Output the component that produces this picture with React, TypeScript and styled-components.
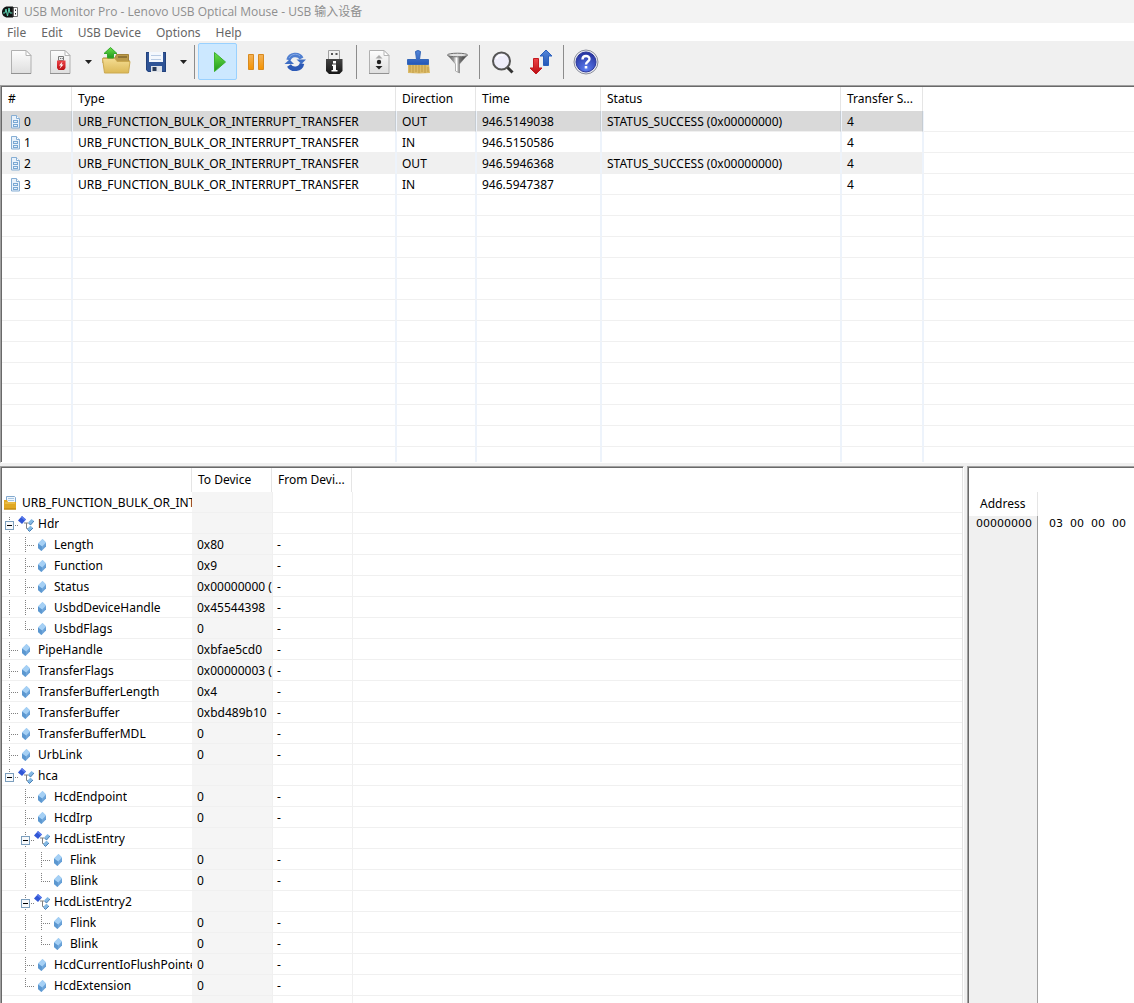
import React, { useState } from "react";
import styled, { createGlobalStyle } from "styled-components";

const GlobalStyle = createGlobalStyle`
  *, *::before, *::after { box-sizing: border-box; }
  body {
    margin: 0;
    background: #f0f0f0;
    color: #000;
    font: 12px/20px "Noto Sans", "Noto Sans CJK SC", sans-serif;
  }
  button { font: inherit; color: inherit; }
`;

const Window = styled.div`
  display: grid;
  grid-template-rows: auto auto auto minmax(0, 381fr) minmax(0, 537fr);
  height: 100vh;
  overflow: hidden;
`;

const TitleBar = styled.header`
  display: flex;
  align-items: center;
  gap: 6px;
  height: 23px;
  padding-left: 2px;
  background: #f3f3f3;
  color: #8f8f8f;
`;

const Title = styled.h1`
  margin: 0;
  font-family: "Open Sans", "Noto Sans CJK SC", sans-serif;
  font-size: 12px;
  font-weight: 400;
`;

const MenuBar = styled.nav`
  display: flex;
  gap: 15px;
  height: 18px;
  padding: 1px 0 0 7px;
  background: #fff;
  color: #666;
`;

const MenuItem = styled.button`
  padding: 0;
  border: 0;
  background: none;
  line-height: 18px;
`;

const Toolbar = styled.div`
  display: flex;
  padding: 2px 2px 5px;
  background: #f0f0f0;
`;

const ToolButton = styled.button<{ $active?: boolean }>`
  display: flex;
  align-items: center;
  justify-content: center;
  width: 39px;
  height: 37px;
  padding: 0;
  border: 1px solid ${(p) => (p.$active ? "#99d1ff" : "transparent")};
  border-radius: 2px;
  background: ${(p) => (p.$active ? "#cce8ff" : "transparent")};
`;

const ArrowButton = styled(ToolButton)`
  width: 17px;
`;

const ToolSeparator = styled.span`
  width: 1px;
  height: 34px;
  margin: 2px 3px 0 2px;
  background: #8c8c8c;
`;

const Pane = styled.section<{ $openRight?: boolean; $openBottom?: boolean }>`
  min-width: 0;
  overflow: hidden;
  background: #fff;
  border-style: solid;
  border-width: 1px ${(p) => (p.$openRight ? 0 : "1px")} ${(p) => (p.$openBottom ? 0 : "1px")} 1px;
  border-color: #a0a0a0 #fff #fff #a0a0a0;
  box-shadow:
    inset 1px 1px 0 #696969,
    inset ${(p) => (p.$openRight ? 0 : "-1px")} ${(p) => (p.$openBottom ? 0 : "-1px")} 0 #e3e3e3;
  padding: 1px ${(p) => (p.$openRight ? 0 : "1px")} ${(p) => (p.$openBottom ? 0 : "1px")} 1px;
`;

const RequestPane = styled(Pane)`
  margin-bottom: 3px;
`;

const LowerPanes = styled.div`
  display: grid;
  grid-template-columns: minmax(0, 964fr) minmax(0, 167fr);
  gap: 3px;
  min-height: 0;
`;

const Table = styled.table`
  width: 100%;
  table-layout: fixed;
  border-collapse: separate;
  border-spacing: 0;
`;

const Col = styled.col<{ $width?: number }>`
  width: ${(p) => (p.$width ? `${p.$width}px` : "auto")};
`;

const HeadCell = styled.th<{ $last?: boolean }>`
  height: 24px;
  padding: 0 5px 0 6px;
  border-right: ${(p) => (p.$last ? "0" : "1px solid #e5e5e5")};
  font-weight: 400;
  text-align: left;
  white-space: nowrap;
  overflow: hidden;
  text-overflow: ellipsis;
`;

const RequestRow = styled.tr<{ $tone?: "selected" | "shaded" }>`
  line-height: 18px;
  background: ${(p) => (p.$tone === "selected" ? "#d9d9d9" : p.$tone === "shaded" ? "#f0f0f0" : "#fff")};
`;

const RequestCell = styled.td<{ $first?: boolean; $selected?: boolean; $filler?: boolean }>`
  height: 21px;
  padding: 2px 0 0 ${(p) => (p.$first ? "6px" : "5px")};
  border-bottom: 1px solid #f0f0f0;
  border-left: ${(p) => (p.$first ? "0" : "1px solid #edf3fb")};
  border-right: ${(p) => (p.$filler ? "0" : `1px solid ${p.$selected ? "#c6ccd2" : "#edf3fb"}`)};
  background: ${(p) => (p.$filler ? "#fff" : "transparent")};
  white-space: nowrap;
  overflow: hidden;
`;

const IndexLabel = styled.span`
  display: flex;
  align-items: center;
  gap: 2px;
`;

const TreeCell = styled.td`
  height: 21px;
  padding: 0;
  border-bottom: 1px solid #f0f0f0;
  overflow: hidden;
`;

const TreeLabel = styled.div`
  display: flex;
  align-items: center;
  height: 20px;
  white-space: nowrap;

  svg, button { flex: none; }
  svg { margin-top: 1px; }
`;

const NodeName = styled.span`
  min-width: 0;
  margin-left: 4px;
  padding-top: 2px;
  line-height: 18px;
  overflow: hidden;
`;

const Expander = styled.button`
  display: block;
  width: 16px;
  height: 20px;
  padding: 0;
  border: 0;
  background: none;

  svg { display: block; margin-top: 3px; }
`;

const ValueCell = styled.td<{ $tinted?: boolean }>`
  height: 21px;
  padding: 2px 0 0 ${(p) => (p.$tinted ? "5px" : "4px")};
  border-bottom: 1px solid #f0f0f0;
  border-left: ${(p) => (p.$tinted ? "0" : "1px solid #f0f0f0")};
  background: ${(p) => (p.$tinted ? "#f5f5f5" : "#fff")};
  line-height: 18px;
  white-space: nowrap;
  overflow: hidden;
`;

const DumpPane = styled(Pane)`
  display: flex;
  flex-direction: column;
  padding-top: 25px;
`;

const DumpTable = styled.table`
  flex: 1;
  width: 100%;
  table-layout: fixed;
  border-spacing: 0;
  border-collapse: separate;
`;

const AddressHead = styled(HeadCell)`
  padding: 0 0 0 11px;
`;

const AddressCell = styled.td`
  padding: 0 0 0 7px;
  border-right: 1px solid #a0a0a0;
  background: #f0f0f0;
  vertical-align: top;
  font: 11px/16px "DejaVu Sans", sans-serif;
`;

const BytesCell = styled.td`
  padding: 0 0 0 11px;
  vertical-align: top;
  font: 11px/16px "DejaVu Sans", sans-serif;
`;

const Bytes = styled.div`
  display: grid;
  grid-template-columns: repeat(4, 21px);
`;

/* ---------- icons ---------- */

const ToolSvg = ({ children }: { children: React.ReactNode }) => (
  <svg width="29" height="29" viewBox="0 0 29 29" fill="none" aria-hidden="true">{children}</svg>
);

const Page = () => (
  <>
    <path d="M4.5 3.5h14.5l5 5v18h-19.5z" fill="url(#paper)" stroke="#b0b0b0" />
    <path d="M19 3.5v5h5z" fill="#fff" stroke="#b5b5b5" />
    <path d="M4 26.5h20" stroke="#929292" />
  </>
);

const Defs = styled.svg`
  position: absolute;
`;

const Gradients = () => (
  <Defs width="0" height="0" aria-hidden="true">
    <defs>
      <linearGradient id="paper" x1="0" y1="0" x2="0" y2="1"><stop stopColor="#fdfdfd" /><stop offset="1" stopColor="#dedede" /></linearGradient>
      <linearGradient id="manila" x1="0" y1="0" x2="0" y2="1"><stop stopColor="#f4dc92" /><stop offset="1" stopColor="#dcb957" /></linearGradient>
      <linearGradient id="green" x1="0" y1="0" x2="0" y2="1"><stop stopColor="#6be04a" /><stop offset="1" stopColor="#20981b" /></linearGradient>
      <linearGradient id="orange" x1="0" y1="0" x2="0" y2="1"><stop stopColor="#f2b25a" /><stop offset="1" stopColor="#f59300" /></linearGradient>
      <linearGradient id="blue" x1="0" y1="0" x2="0" y2="1"><stop stopColor="#5586d8" /><stop offset="1" stopColor="#2458b8" /></linearGradient>
      <linearGradient id="red" x1="0" y1="0" x2="0" y2="1"><stop stopColor="#ef4549" /><stop offset="1" stopColor="#b90d12" /></linearGradient>
      <linearGradient id="dark" x1="0" y1="0" x2="0" y2="1"><stop stopColor="#444" /><stop offset="1" stopColor="#171717" /></linearGradient>
      <linearGradient id="metal" x1="0" y1="0" x2="1" y2="0"><stop stopColor="#4a4a4a" /><stop offset=".3" stopColor="#999" /><stop offset=".45" stopColor="#fff" /><stop offset=".6" stopColor="#777" /><stop offset="1" stopColor="#333" /></linearGradient>
      <linearGradient id="drop" x1="0" y1="0" x2="1" y2="1"><stop stopColor="#a9d3f6" /><stop offset="1" stopColor="#4f8dcb" /></linearGradient>
      <radialGradient id="globe" cx=".5" cy=".85" r=".8"><stop stopColor="#5b7df0" /><stop offset="1" stopColor="#2734a0" /></radialGradient>
    </defs>
  </Defs>
);

const AppIcon = () => (
  <svg width="16" height="12" viewBox="0 0 16 12" aria-hidden="true">
    <path d="M5.500.5C2 .5 0 3 0 6s2 5.500 5.500 5.500H11V.5z" fill="#101414" />
    <path d="M1 7h2l1-4 1.500 7L7 2l1 5h3" fill="none" stroke="#5fd6b4" />
    <path d="M11 1.500h4.500v9H11z" fill="#fff" stroke="#777" />
    <path d="M11 1v10" stroke="#111" />
    <path d="M13 3.500h1v1.500h-1zM13 7h1v1.500h-1z" fill="#222" />
  </svg>
);

const NewIcon = () => <ToolSvg><Page /></ToolSvg>;
const NewUsbIcon = () => (
  <ToolSvg>
    <Page />
    <path d="M12.500 9.500h5v4h-5z" fill="#eee" stroke="#777" />
    <path d="M14 11h.8v1H14zM15.800 11h.8v1h-.8z" fill="#555" />
    <path d="M11 13.500h8.500V21l-1.500 2h-5.500L11 21z" fill="url(#red)" />
    <path d="M16.500 14.500l-3.500 4h2l-1.500 3.500 4-4.500h-2z" fill="#fff" />
  </ToolSvg>
);
const OpenIcon = () => (
  <ToolSvg>
    <path d="M1 11h12l1.500-3.500h12V13H27v3H1z" fill="#bb9a49" stroke="#a3833a" />
    <path d="M16 9h9v2h-9z" fill="#8f7436" />
    <path d="M.5 11.500h12.500l2 3h13L26.500 26h-24z" fill="url(#manila)" stroke="#cba950" />
    <path d="M8.500.5l6.500 6h-3.500V11h-6V6.500H2z" fill="url(#green)" stroke="#35a82b" />
  </ToolSvg>
);
const SaveIcon = () => (
  <ToolSvg>
    <path d="M5 5h20v20H7l-2-2z" fill="#2f5496" />
    <path d="M5.500 5.500h19v19H7.500l-2-2z" stroke="#23427c" />
    <path d="M8 5h14v10H8z" fill="#f4f8fd" />
    <path d="M10 8.500h10M10 12.500h10" stroke="#b8cbe4" />
    <path d="M10 19h11v6H10z" fill="#dfe3e8" />
    <path d="M11.500 20h4v4h-4z" fill="#2a3b58" />
  </ToolSvg>
);
const PlayIcon = () => <ToolSvg><path d="M11.500 5.500L22.500 15 11.500 24.500z" fill="url(#green)" stroke="#3bb02e" /></ToolSvg>;
const PauseIcon = () => (
  <ToolSvg><path d="M6.500 7.500h5v15h-5zM16.500 7.500h5v15h-5z" fill="url(#orange)" stroke="#d98a1e" /></ToolSvg>
);
const RefreshIcon = () => (
  <ToolSvg>
    <path d="M7.500 13a7 6.500 0 0 1 13-1.500" stroke="#4f7ed0" strokeWidth="4.500" />
    <path d="M21 16.500a7 6.500 0 0 1-13 2" stroke="#2c59b6" strokeWidth="4.500" />
    <path d="M15.500 12.500h9.500l-4.500 4.500z" fill="#3d6dc4" />
    <path d="M3.500 17h9.500l-4.500-4.500z" fill="#3d6dc4" />
    <path d="M8 11c2-4 8-5 11-2" stroke="#86a9e4" />
  </ToolSvg>
);
const UsbInfoIcon = () => (
  <ToolSvg>
    <path d="M8.500 3.500h11v9h-11z" fill="#f0f0f0" stroke="#a0a0a0" />
    <path d="M11 6h2v2h-2zM15.500 6h2v2h-2z" fill="#555" />
    <path d="M6 12h16.500v12l-3 3H9l-3-3z" fill="url(#dark)" />
    <path d="M13 14h3v2.500h-3zM12 17.500h4V23h1.500v1.500h-6V23H13v-4h-1z" fill="#fff" />
  </ToolSvg>
);
const FitIcon = () => (
  <ToolSvg>
    <Page />
    <path d="M14 8l3.500 3.500h-7z" fill="#aaa" /><circle cx="14" cy="15" r="2.200" fill="#222" /><path d="M10.500 19h7L14 22.500z" fill="#222" />
  </ToolSvg>
);
const BrushIcon = () => (
  <ToolSvg>
    <path d="M4 17.500h21l1 8.500c-7 .5-15 .5-22 0z" fill="#dcbb69" />
    <path d="M6 18v7M9 18v8M12 18v7M15 18v8M18 18v7M21 18v8M24 20v5" stroke="#c19b45" />
    <path d="M11.500 4.500q2.500-2 5 0l-1 8h9v5h-21v-5h9z" fill="url(#blue)" stroke="#3467b8" />
  </ToolSvg>
);
const FilterIcon = () => (
  <ToolSvg>
    <path d="M4.500 8l8 9V24l4 2v-9l8-9z" fill="url(#metal)" stroke="#777" strokeWidth=".5" />
    <ellipse cx="14.500" cy="8" rx="10" ry="1.800" fill="#e2e2e2" stroke="#6e6e6e" />
  </ToolSvg>
);
const SearchIcon = () => (
  <ToolSvg>
    <path d="M19.500 20.500l5 5" stroke="#333" strokeWidth="3" />
    <circle cx="13.500" cy="14" r="8.500" fill="#eeedfa" stroke="#555" strokeWidth="2" />
    <path d="M8.500 12c1-3 4-4.500 7-3.500" stroke="#fff" strokeWidth="1.500" />
  </ToolSvg>
);
const ArrowsIcon = () => (
  <ToolSvg>
    <path d="M6.500 11.500h5V21H15l-6 6-6-6h3.500z" fill="url(#red)" stroke="#c21a1f" />
    <path d="M16.500 18.500h5V9H25l-6-6-6 6h3.500z" fill="url(#blue)" stroke="#2b60bd" />
  </ToolSvg>
);
const HelpIcon = () => (
  <ToolSvg>
    <circle cx="14" cy="15" r="12" fill="#e4e6ee" stroke="#8b8e9c" />
    <circle cx="14" cy="15" r="10" fill="url(#globe)" stroke="#2b379c" />
    <path d="M10.500 12.500c0-4.500 7-4.500 7-.5 0 2.500-3.500 2.500-3.500 5.500" stroke="#fff" strokeWidth="2.400" />
    <path d="M12.700 19h2.600v2.500h-2.600z" fill="#fff" />
  </ToolSvg>
);
const CaretIcon = () => (
  <svg width="7" height="4" viewBox="0 0 7 4" aria-hidden="true"><path d="M0 0h7L3.500 4z" fill="#222" /></svg>
);

const RecordIcon = () => (
  <svg width="14" height="16" viewBox="0 0 14 16" aria-hidden="true">
    <path d="M3.500 1.500h5l3 3v9.500h-8z" fill="#e9f2fb" stroke="#86aed4" />
    <path d="M8.500 1.500v3h3" fill="#fff" stroke="#86aed4" />
    <path d="M5 6h5v3H5zM5 10h5v3H5z" fill="#7aa8d3" />
    <path d="M6 7.500h3M6 11.500h3" stroke="#e6f1fb" />
  </svg>
);
const PackageIcon = () => (
  <svg width="16" height="16" viewBox="0 0 16 16" aria-hidden="true">
    <path d="M4.500 1.500h8l1 1V8h-9z" fill="#f1f7fd" stroke="#83a9ce" />
    <path d="M6 3.500h6M6 5.500h6" stroke="#a8c6e2" />
    <path d="M2 5h3l1 2h8v7.500H2z" fill="#e0a823" />
    <path d="M3 8h10" stroke="#f3ce67" />
    <path d="M2 14h12" stroke="#b77f0b" />
  </svg>
);
const StructIcon = () => (
  <svg width="16" height="16" viewBox="0 0 16 16" aria-hidden="true">
    <path d="M6 7h4M8.500 7v5.500H11" fill="none" stroke="#808080" />
    <path d="M0 4.500L4 0l4 3.500L4 8z" fill="#3157d6" /><path d="M4 0l4 3.500-1.500 1L3 1.500z" fill="#5d7cec" />
    <path d="M10 6.500L13.500 3 16 5l-3.500 4zM9 13l3.500-3.500L15 12l-3.500 3.500z" fill="#83b8e3" />
    <path d="M10.500 7l2 2L16 5M9.500 13.500l2 2L15 12" fill="none" stroke="#4a80b5" />
  </svg>
);
const FieldIcon = () => (
  <svg width="16" height="16" viewBox="0 0 16 16" aria-hidden="true">
    <path d="M8.500 2L12 5.500v4L7.500 14 4 11V6.500z" fill="url(#drop)" />
    <path d="M8.500 2L12 5.500 8 9.500l-4-3z" fill="#a5d0f5" />
    <path d="M4 6.500l4 3L7.500 14 4 11z" fill="#5b97d0" />
  </svg>
);

/* Dotted connector segment: which halves of the vertical are drawn, and whether it branches right. */
const Guide = ({ up, down, branch }: { up?: boolean; down?: boolean; branch?: boolean }) => (
  <svg width="16" height="16" viewBox="0 0 16 16" aria-hidden="true">
    <g stroke="#808080" strokeDasharray="1 1" fill="none">
      {up && <path d="M7.500 0v8" />}
      {down && <path d="M7.500 8v8" />}
      {branch && <path d="M7 8.500h9" />}
    </g>
  </svg>
);
const ExpanderBox = ({ open, last }: { open: boolean; last: boolean }) => (
  <svg width="16" height="16" viewBox="0 0 16 16" aria-hidden="true">
    <path d={last ? "M7.500 0v3M13 8.500h3" : "M7.500 0v3M7.500 14v2M13 8.500h3"} stroke="#808080" strokeDasharray="1 1" />
    <rect x="3.500" y="4.500" width="8" height="8" fill="#f7f9fb" stroke="#7b9ebd" />
    <path d={open ? "M5 8.500h5" : "M5 8.500h5M7.500 6v5"} stroke="#000" />
  </svg>
);

/* ---------- data ---------- */

const requests = [
  ["0", "OUT", "946.5149038", "STATUS_SUCCESS (0x00000000)"],
  ["1", "IN", "946.5150586", ""],
  ["2", "OUT", "946.5946368", "STATUS_SUCCESS (0x00000000)"],
  ["3", "IN", "946.5947387", ""],
];

type Node = { name: string; value?: string; children?: Node[] };

const leaf = (name: string, value = "0"): Node => ({ name, value });

const fields: Node[] = [
  {
    name: "Hdr",
    children: [
      leaf("Length", "0x80"),
      leaf("Function", "0x9"),
      leaf("Status", "0x00000000 ("),
      leaf("UsbdDeviceHandle", "0x45544398"),
      leaf("UsbdFlags"),
    ],
  },
  leaf("PipeHandle", "0xbfae5cd0"),
  leaf("TransferFlags", "0x00000003 ("),
  leaf("TransferBufferLength", "0x4"),
  leaf("TransferBuffer", "0xbd489b10"),
  leaf("TransferBufferMDL"),
  leaf("UrbLink"),
  {
    name: "hca",
    children: [
      leaf("HcdEndpoint"),
      leaf("HcdIrp"),
      { name: "HcdListEntry", children: [leaf("Flink"), leaf("Blink")] },
      { name: "HcdListEntry2", children: [leaf("Flink"), leaf("Blink")] },
      leaf("HcdCurrentIoFlushPointer"),
      leaf("HcdExtension"),
    ],
  },
];

function FieldRows({ nodes, trail = [] }: { nodes: Node[]; trail?: boolean[] }) {
  const [closed, setClosed] = useState<string[]>([]);
  return (
    <>
      {nodes.map((node, i) => {
        const last = i === nodes.length - 1;
        const open = !closed.includes(node.name);
        const toggle = () =>
          setClosed(open ? [...closed, node.name] : closed.filter((name) => name !== node.name));
        return (
          <React.Fragment key={node.name}>
            <tr>
              <TreeCell>
                <TreeLabel>
                  {trail.map((more, depth) => <Guide key={depth} up={more} down={more} />)}
                  {node.children ? (
                    <Expander aria-label={node.name} aria-expanded={open} onClick={toggle}>
                      <ExpanderBox open={open} last={last} />
                    </Expander>
                  ) : (
                    <Guide up down={!last} branch />
                  )}
                  {node.children ? <StructIcon /> : <FieldIcon />}
                  <NodeName>{node.name}</NodeName>
                </TreeLabel>
              </TreeCell>
              <ValueCell $tinted>{node.value}</ValueCell>
              <ValueCell>{node.children ? "" : "-"}</ValueCell>
              <ValueCell />
            </tr>
            {node.children && open && <FieldRows nodes={node.children} trail={[...trail, !last]} />}
          </React.Fragment>
        );
      })}
    </>
  );
}

const Tool = ({ label, active, children }: { label: string; active?: boolean; children: React.ReactNode }) => (
  <ToolButton aria-label={label} $active={active}>{children}</ToolButton>
);

export default function App() {
  return (
    <Window>
      <GlobalStyle />
      <TitleBar>
        <Gradients />
        <AppIcon />
        <Title>USB Monitor Pro - Lenovo USB Optical Mouse - USB 输入设备</Title>
      </TitleBar>
      <MenuBar>
        {["File", "Edit", "USB Device", "Options", "Help"].map((item) => <MenuItem key={item}>{item}</MenuItem>)}
      </MenuBar>
      <Toolbar role="toolbar">
        <Tool label="New"><NewIcon /></Tool>
        <Tool label="New USB session"><NewUsbIcon /></Tool>
        <ArrowButton aria-label="New USB session options"><CaretIcon /></ArrowButton>
        <Tool label="Open"><OpenIcon /></Tool>
        <Tool label="Save"><SaveIcon /></Tool>
        <ArrowButton aria-label="Save options"><CaretIcon /></ArrowButton>
        <ToolSeparator />
        <Tool label="Start" active><PlayIcon /></Tool>
        <Tool label="Pause"><PauseIcon /></Tool>
        <Tool label="Restart"><RefreshIcon /></Tool>
        <Tool label="Device information"><UsbInfoIcon /></Tool>
        <ToolSeparator />
        <Tool label="Auto scroll"><FitIcon /></Tool>
        <Tool label="Clear"><BrushIcon /></Tool>
        <Tool label="Filter"><FilterIcon /></Tool>
        <ToolSeparator />
        <Tool label="Find"><SearchIcon /></Tool>
        <Tool label="Direction"><ArrowsIcon /></Tool>
        <ToolSeparator />
        <Tool label="Help"><HelpIcon /></Tool>
      </Toolbar>

      <RequestPane $openRight>
        <Table>
          <colgroup>
            {[70, 324, 80, 125, 240, 82].map((width, i) => <Col key={i} $width={width} />)}
            <Col />
          </colgroup>
          <thead>
            <tr>
              {["#", "Type", "Direction", "Time", "Status", "Transfer S..."].map((name) => (
                <HeadCell key={name}>{name}</HeadCell>
              ))}
              <HeadCell $last />
            </tr>
          </thead>
          <tbody>
            {requests.map(([index, direction, time, status], i) => {
              const selected = i === 0;
              return (
                <RequestRow key={index} $tone={selected ? "selected" : i % 2 ? undefined : "shaded"}>
                  <RequestCell $first $selected={selected}>
                    <IndexLabel><RecordIcon />{index}</IndexLabel>
                  </RequestCell>
                  {["URB_FUNCTION_BULK_OR_INTERRUPT_TRANSFER", direction, time, status, "4"].map((text, c) => (
                    <RequestCell key={c} $selected={selected}>{text}</RequestCell>
                  ))}
                  <RequestCell $filler />
                </RequestRow>
              );
            })}
            {Array.from({ length: 13 }, (_, i) => (
              <RequestRow key={i}>
                <RequestCell $first />
                <RequestCell /><RequestCell /><RequestCell /><RequestCell /><RequestCell />
                <RequestCell $filler />
              </RequestRow>
            ))}
          </tbody>
        </Table>
      </RequestPane>

      <LowerPanes>
        <Pane $openBottom>
          <Table>
            <colgroup>
              <Col $width={190} /><Col $width={80} /><Col $width={80} /><Col />
            </colgroup>
            <thead>
              <tr>
                <HeadCell /><HeadCell>To Device</HeadCell><HeadCell>From Devi...</HeadCell><HeadCell $last />
              </tr>
            </thead>
            <tbody>
              <tr>
                <TreeCell>
                  <TreeLabel><PackageIcon /><NodeName>URB_FUNCTION_BULK_OR_INTERRUPT_TRANSFER</NodeName></TreeLabel>
                </TreeCell>
                <ValueCell $tinted /><ValueCell /><ValueCell />
              </tr>
              <FieldRows nodes={fields} />
              <tr><TreeCell /><ValueCell $tinted /><ValueCell /><ValueCell /></tr>
            </tbody>
          </Table>
        </Pane>
        <DumpPane $openRight $openBottom>
          <DumpTable>
            <colgroup><Col $width={69} /><Col /></colgroup>
            <thead><tr><AddressHead>Address</AddressHead><HeadCell $last /></tr></thead>
            <tbody>
              <tr>
                <AddressCell>00000000</AddressCell>
                <BytesCell>
                  <Bytes>{["03", "00", "00", "00"].map((byte, i) => <span key={i}>{byte}</span>)}</Bytes>
                </BytesCell>
              </tr>
            </tbody>
          </DumpTable>
        </DumpPane>
      </LowerPanes>
    </Window>
  );
}
